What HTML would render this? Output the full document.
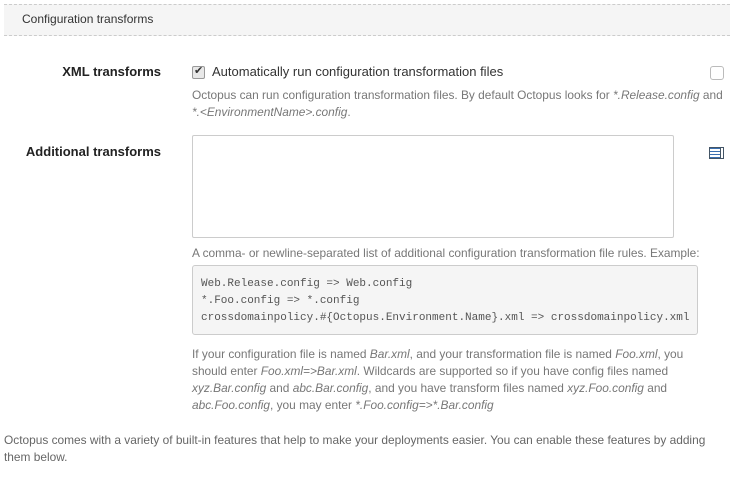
<!DOCTYPE html>
<html><head><style>
body{margin:0;width:732px;height:478px;background:#fff;font-family:"Liberation Sans",sans-serif;color:#333;position:relative;overflow:hidden}
.a{position:absolute;white-space:nowrap}
.h{position:absolute;left:4px;top:4px;width:726px;height:30px;background:#f5f5f5;border-top:1px dashed #ccc;border-bottom:1px dashed #ccc}
.lbl{font-weight:bold;font-size:13px;right:571px;color:#222}
.help{color:#777;font-size:11.9px;line-height:17px}
</style></head><body>
<div class="h"></div>
<div class="a" style="left:22px;top:12px;font-size:12px;color:#333">Configuration transforms</div>
<div class="a lbl" style="top:64px">XML transforms</div>
<div class="a" style="left:192px;top:66px;width:11px;height:11px;border:1px solid #999;border-radius:2px;background:#e8e8e8"></div>
<div class="a" style="left:194px;top:64px;font-size:11px;color:#333">✔</div>
<div class="a" style="left:212px;top:64px;font-size:13px">Automatically run configuration transformation files</div>
<div class="a" style="left:710px;top:66px;width:12px;height:12px;border:1px solid #bbb;border-radius:3px"></div>
<div class="a help" style="left:192px;top:87px">Octopus can run configuration transformation files. By default Octopus looks for <i>*.Release.config</i> and<br><i>*.&lt;EnvironmentName&gt;.config</i>.</div>
<div class="a lbl" style="top:144px">Additional transforms</div>
<div class="a" style="left:192px;top:135px;width:480px;height:101px;border:1px solid #ccc;border-radius:2px"></div>
<div class="a" style="left:709px;top:147px;width:10px;height:10px;border:1px solid #456;background:repeating-linear-gradient(#3a6fb0 0 1px,#fff 1px 3px)"></div>
<div class="a" style="left:719px;top:147px;width:4px;height:10px;border:1px solid #456;border-left:0"></div>
<div class="a help" style="left:192px;top:245px">A comma- or newline-separated list of additional configuration transformation file rules. Example:</div>
<div class="a" style="left:192px;top:265px;width:496px;height:60px;padding:4px;background:#f5f5f5;border:1px solid #ccc;border-radius:3px"></div>
<div class="a" style="left:201px;top:276px;font-family:'Liberation Mono',monospace;font-size:11px;line-height:17px;color:#555">Web.Release.config =&gt; Web.config<br>*.Foo.config =&gt; *.config<br>crossdomainpolicy.#{Octopus.Environment.Name}.xml =&gt; crossdomainpolicy.xml</div>
<div class="a help" style="left:192px;top:346px">If your configuration file is named <i>Bar.xml</i>, and your transformation file is named <i>Foo.xml</i>, you<br>should enter <i>Foo.xml=&gt;Bar.xml</i>. Wildcards are supported so if you have config files named<br><i>xyz.Bar.config</i> and <i>abc.Bar.config</i>, and you have transform files named <i>xyz.Foo.config</i> and<br><i>abc.Foo.config</i>, you may enter <i>*.Foo.config=&gt;*.Bar.config</i></div>
<div class="a help" style="left:4px;top:432px;color:#666">Octopus comes with a variety of built-in features that help to make your deployments easier. You can enable these features by adding<br>them below.</div>
</body></html>
